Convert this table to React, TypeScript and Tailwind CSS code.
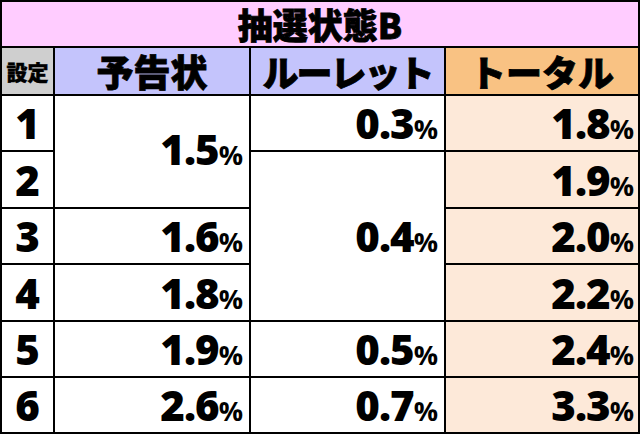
import React from "react";

const jp = { fontFamily: '"Noto Sans CJK JP", "Noto Sans", sans-serif' };
const num = { fontFamily: '"Open Sans", "Noto Sans", sans-serif' };

function Pct({ v }: { v: string }) {
  return (
    <span className="font-extrabold text-black leading-none whitespace-nowrap" style={num}>
      <span className="text-[42px] tracking-[-1px]">{v}</span>
      <span className="text-[27px] font-bold">%</span>
    </span>
  );
}

function Val({ v, cls, pr = "pr-[5px]" }: { v: string; cls: string; pr?: string }) {
  return (
    <div className={`flex items-center justify-end ${pr} ${cls}`}>
      <Pct v={v} />
    </div>
  );
}

export default function App() {
  const white = "bg-white";
  const tot = "bg-[#fde9d9]";
  return (
    <div className="w-[640px] h-[434px] bg-black p-[2px] grid gap-[2px] grid-cols-[51px_194px_193px_192px] grid-rows-[44px_46px_54px_55px_54px_55px_54px_54px]">
      <div className="col-span-4 bg-[#ffccff] flex items-center justify-center">
        <span className="text-[35px] font-black leading-[40px] text-black [-webkit-text-stroke:0.8px_black]" style={jp}>
          抽選状態B
        </span>
      </div>
      <div className="bg-[#cfcfcf] flex items-center justify-center">
        <span className="text-[21px] font-black leading-none text-black [-webkit-text-stroke:0.4px_black]" style={jp}>
          設定
        </span>
      </div>
      <div className="bg-[#c4c4fc] flex items-center justify-center">
        <span className="text-[37px] font-black leading-[42px] text-black [-webkit-text-stroke:0.8px_black]" style={jp}>
          予告状
        </span>
      </div>
      <div className="bg-[#c4c4fc] flex items-center justify-center">
        <span className="text-[36px] font-black leading-[42px] text-black tracking-[-2px] [-webkit-text-stroke:0.8px_black]" style={jp}>
          ルーレット
        </span>
      </div>
      <div className="bg-[#f9c283] flex items-center justify-center">
        <span className="text-[36px] font-black leading-[42px] text-black [-webkit-text-stroke:0.8px_black]" style={jp}>
          トータル
        </span>
      </div>

      {/* row 1 */}
      <Set n="1" />
      <Val v="1.5" cls={`${white} row-span-2 pb-[6px]`} pr="pr-[6px]" />
      <Val v="0.3" cls={white} pr="pr-[6px]" />
      <Val v="1.8" cls={tot} pr="pr-[4px]" />

      {/* row 2 */}
      <Set n="2" />
      <Val v="0.4" cls={`${white} row-span-3`} pr="pr-[6px]" />
      <Val v="1.9" cls={tot} pr="pr-[4px]" />

      {/* row 3 */}
      <Set n="3" />
      <Val v="1.6" cls={white} pr="pr-[6px]" />
      <Val v="2.0" cls={tot} pr="pr-[4px]" />

      {/* row 4 */}
      <Set n="4" />
      <Val v="1.8" cls={white} pr="pr-[6px]" />
      <Val v="2.2" cls={tot} pr="pr-[4px]" />

      {/* row 5 */}
      <Set n="5" />
      <Val v="1.9" cls={white} pr="pr-[6px]" />
      <Val v="0.5" cls={white} pr="pr-[6px]" />
      <Val v="2.4" cls={tot} pr="pr-[4px]" />

      {/* row 6 */}
      <Set n="6" />
      <Val v="2.6" cls={white} pr="pr-[6px]" />
      <Val v="0.7" cls={white} pr="pr-[6px]" />
      <Val v="3.3" cls={tot} pr="pr-[4px]" />
    </div>
  );
}

function Set({ n }: { n: string }) {
  return (
    <div className="bg-white flex items-center justify-center">
      <span className="text-[42px] font-extrabold leading-none text-black" style={num}>
        {n}
      </span>
    </div>
  );
}
